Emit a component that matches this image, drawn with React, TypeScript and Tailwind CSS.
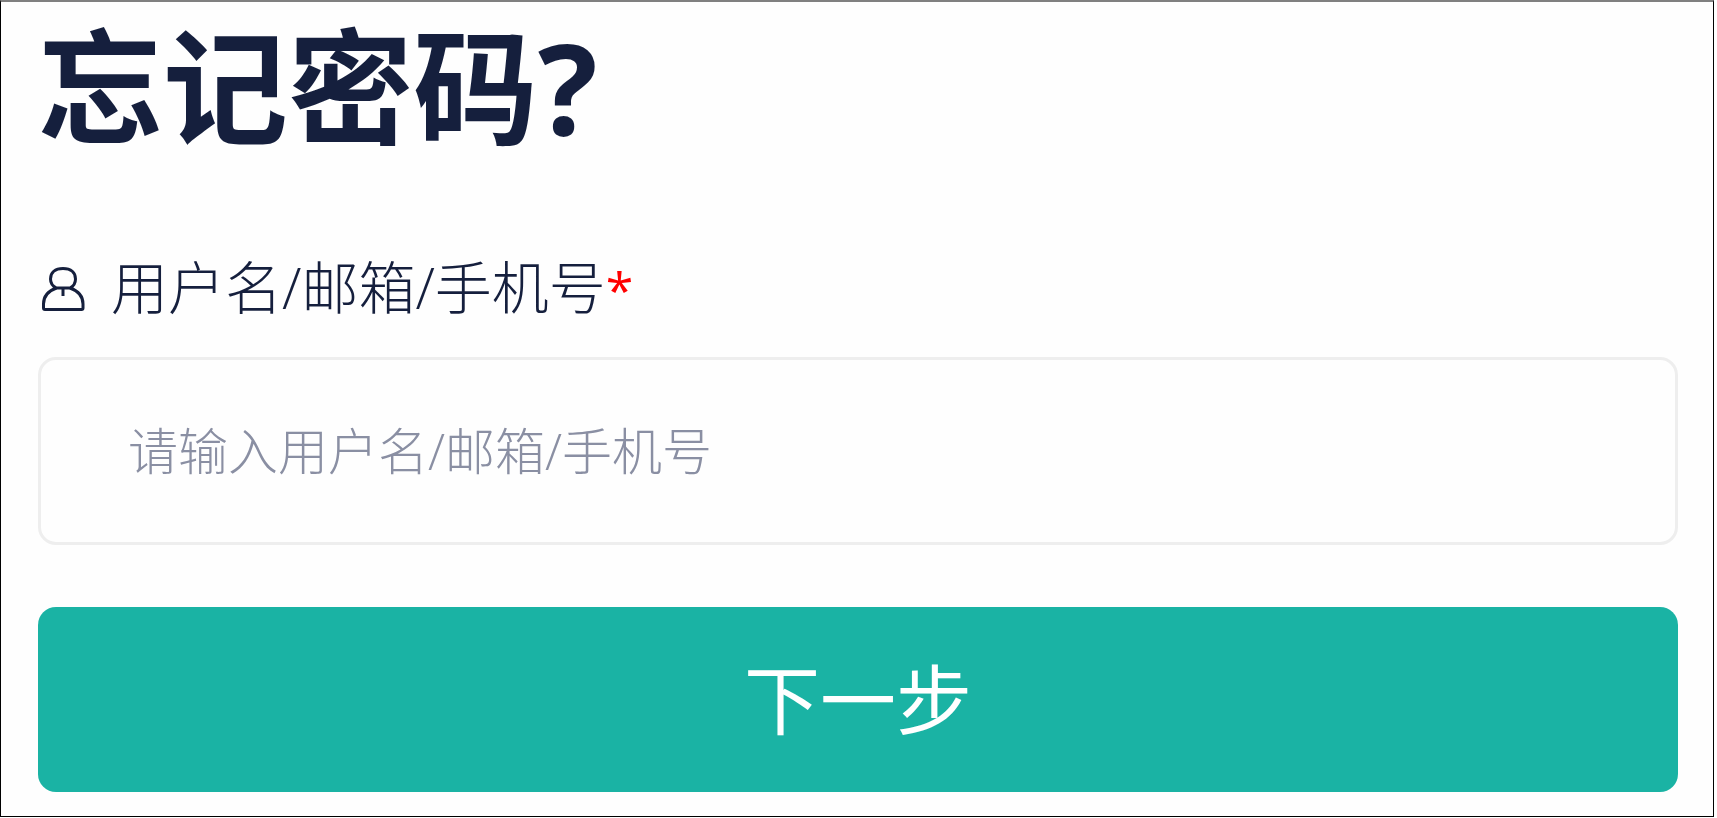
import { useState } from "react";

function UserIcon() {
  return (
    <svg
      className="h-12 w-11 shrink-0"
      viewBox="0 0 44 48"
      fill="none"
      stroke="currentColor"
      strokeWidth="3"
      strokeLinejoin="round"
      aria-hidden="true"
    >
      <path d="M15.500 25C11 23 9.500 19.500 9.500 16C9.500 9.500 14 5.500 22 5.500s12.500 4 12.500 10.500c0 3.500-1.500 7-5.500 9z" />
      <path d="M15.500 25C7 28 2.500 33 2.500 41v4q0 1.500 1.500 1.500h36.500q1.500 0 1.500-1.500V41c0-8-4.500-13-13-16" />
      <path d="M22 26v7" />
    </svg>
  );
}

export default function App() {
  const [account, setAccount] = useState("");

  return (
    <main className="mr-[3px] mb-px border border-t-2 border-black border-t-[#808080] bg-[#fefefe] pr-[35px] pb-6 pl-[37px] font-['Open_Sans','Noto_Sans_CJK_SC',sans-serif] text-[#151f3d]">
      <h1 className="text-[125px] leading-[170px] font-bold">忘记密码?</h1>

      <form onSubmit={(e) => e.preventDefault()}>
        <div className="mt-[75px] flex items-center gap-[26px] pl-[3px]">
          <UserIcon />
          <label
            htmlFor="account"
            className="text-[57px] leading-[80px] font-light"
          >
            用户名/邮箱/手机号
            <span className="text-[50px] leading-none font-normal text-[#ff0000]">
              *
            </span>
          </label>
        </div>

        <input
          id="account"
          type="text"
          required
          value={account}
          onChange={(e) => setAccount(e.target.value)}
          placeholder="请输入用户名/邮箱/手机号"
          className="mt-[30px] block h-[188px] w-full rounded-[18px] border-3 border-[#eeeeee] bg-transparent px-[87px] text-[50px] font-light outline-none placeholder:text-[#8a8fa3]"
        />

        <button
          type="submit"
          className="mt-[62px] block h-[185px] w-full rounded-[18px] bg-[#1ab3a4] text-[76px] leading-[100px] text-white"
        >
          下一步
        </button>
      </form>
    </main>
  );
}
